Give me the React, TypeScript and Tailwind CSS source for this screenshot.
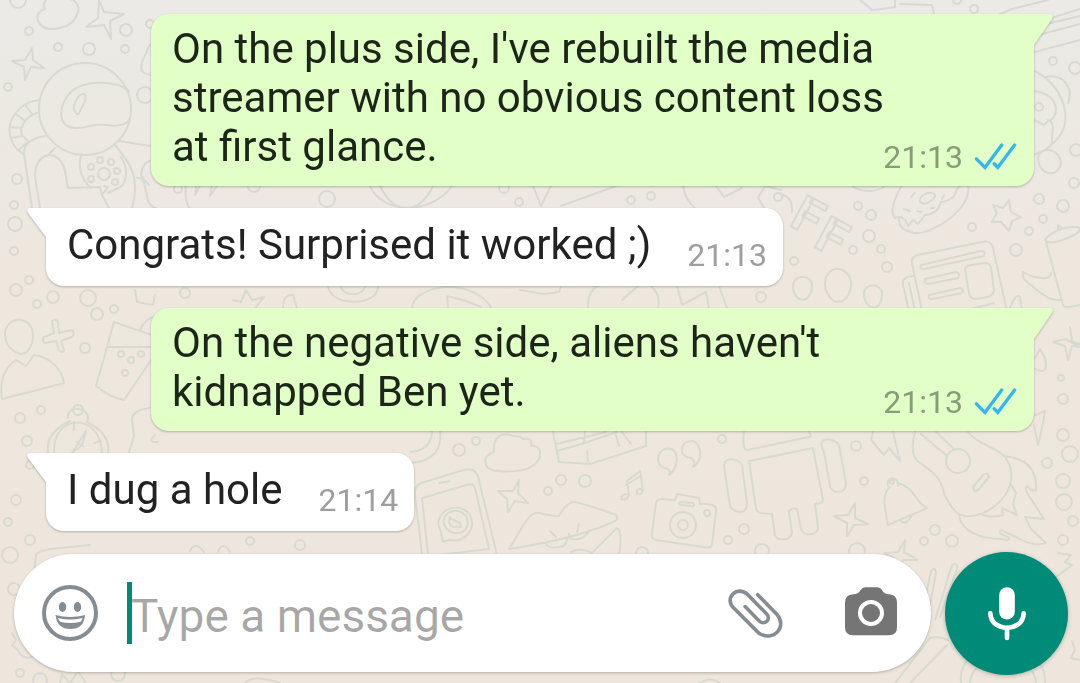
import type { ReactNode } from "react";

type Message = {
  text: string;
  time: string;
  sent?: boolean;
};

const messages: Message[] = [
  {
    text: "On the plus side, I've rebuilt the media streamer with no obvious content loss at first glance.",
    time: "21:13",
    sent: true,
  },
  { text: "Congrats! Surprised it worked ;)", time: "21:13" },
  {
    text: "On the negative side, aliens haven't kidnapped Ben yet.",
    time: "21:13",
    sent: true,
  },
  { text: "I dug a hole", time: "21:14" },
];

// x, y, radius
const bubbles = [
  [18, 0, 8], [29, 31, 4], [126, 30, 6], [58, 47, 4], [89, 49, 6], [125, 49, 4],
  [8, 87, 4], [145, 95, 8], [17, 179, 5], [14, 205, 4], [150, 24, 4], [858, 206, 4],
  [871, 215, 5], [869, 236, 6], [853, 250, 4], [881, 249, 4], [887, 267, 5], [794, 261, 4],
  [972, 227, 4], [1039, 199, 5], [1063, 206, 6], [1043, 219, 4], [1029, 231, 4], [1016, 250, 6],
  [1074, 183, 5], [16, 290, 6], [37, 304, 4], [53, 297, 6], [88, 298, 8], [97, 314, 6],
  [114, 309, 4], [85, 348, 5], [20, 418, 5], [41, 410, 4], [27, 441, 5], [30, 465, 4],
  [459, 450, 6], [476, 441, 4], [561, 480, 5], [585, 481, 6], [548, 491, 4], [722, 439, 4],
  [728, 540, 4], [744, 529, 5], [642, 553, 6], [856, 446, 5], [864, 481, 4], [762, 551, 7],
  [857, 551, 8], [924, 541, 4], [935, 530, 5], [952, 541, 6], [1063, 435, 6], [1070, 454, 8],
  [1047, 463, 5], [1063, 481, 7], [1064, 502, 8], [1073, 521, 5], [1063, 540, 5], [10, 555, 8],
  [14, 589, 6], [20, 673, 4], [40, 680, 7], [118, 674, 7], [974, 9, 4], [1053, 61, 4],
  [1075, 68, 6], [1076, 150, 6], [957, 0, 4], [1061, 378, 3], [1063, 399, 5], [15, 224, 7],
  [14, 251, 4], [29, 280, 4], [178, 189, 4], [254, 186, 6], [327, 199, 8], [504, 188, 5],
  [519, 202, 4], [631, 200, 4], [651, 196, 4], [778, 197, 4], [185, 293, 5], [761, 297, 5],
  [121, 354, 3], [131, 360, 3], [141, 354, 3], [125, 373, 3], [100, 160, 3], [111, 162, 3],
  [91, 167, 3], [117, 171, 3], [91, 179, 3], [115, 182, 3], [104, 174, 6], [16, 500, 5],
  [8, 522, 4], [30, 540, 5], [300, 545, 5], [250, 541, 4],
];

const doodles = [
  // cloud, sparkles
  "M46 0Q42 6 45 9Q35 12 38 21Q42 30 54 29Q74 27 78 12Q80 3 72 0",
  "M99 0L104 12L124 14L110 21L111 39L104 25L86 27L98 18Z",
  "M32 48L33 60L44 68L31 67L25 80L24 67L12 61L25 60Z",
  "M519 480L518 493L528 503L515 501L508 512L507 499L498 491L513 491Z",
  "M855 503L855 518L868 524L854 525L847 536L847 523L834 516L848 515Z",
  "M1070 327L1072 341L1080 344M1080 347L1072 346L1068 360L1065 346L1053 342L1065 339Z",
  "M905 540L904 552L918 560L903 560L898 570L894 558L884 553L898 552Z",
  // astronaut
  "M129 91C118 81 87 79 72 91C58 103 56 127 75 128C89 129 91 122 106 125C119 127 128 124 129 119",
  "M75 111C71 108 78 94 83 94C91 94 79 112 79 113Q77 116 75 111Z",
  "M39 100C18 102 7 122 10 134C12 145 16 149 23 154M37 113C25 117 19 127 22 135L28 141M26 106L32 114M16 114L25 121M10 127L21 128M11 138L22 136M19 150L26 143",
  "M45 136Q23 140 24 154L32 208M40 208L35 177C34 151 60 147 65 171L68 188L100 187L102 195L108 187L104 186M102 195L109 208M55 148L48 155M115 145C130 163 141 177 132 208M119 141L151 146",
  "M121 157C127 166 128 178 122 186L108 193M82 154C77 164 81 180 91 188",
  "M155 160Q142 160 141 176L149 185M155 40Q146 48 147 52Q139 64 142 71Q145 75 155 75M137 178C150 177 142 206 156 208",
  // bear and lines on the right
  "M1000 14L1012 9L1048 0M1030 28L1080 16M1035 36L1080 24M1035 52L1080 40M1042 21L1080 9",
  "M860 0L872 10M874 10L895 7L895 0M900 4L932 5L934 14",
  "M1030 69C1064 82 1078 125 1052 144C1047 150 1038 154 1030 155M1046 77C1063 73 1074 88 1068 103M1030 91C1060 91 1061 118 1048 121L1044 125L1030 118M1048 120C1056 121 1051 136 1052 144",
  "M1038 157C1042 145 1060 149 1061 163C1058 179 1038 176 1038 157Z",
  // donut
  "M901 187Q888 210 895 218Q904 214 908 226L913 220L918 224L925 215Q938 214 941 202Q955 200 956 191L960 186M901 187L904 181M967 181C977 207 932 235 915 233Q898 230 899 219M911 197L915 193M904 209L910 211M917 211L921 212M942 199L944 195M931 208L934 208",
  "M920 201C919 194 933 190 935 195C936 199 924 208 920 201Z",
  "M853 187Q870 195 884 187M780 194Q793 196 792 212",
  // star, newspaper, balloons
  "M1009 200L1011 212L1021 217L1012 221L1009 231L1001 222L992 222L997 213L993 205L1003 208Z",
  "M922 311L912 263Q911 257 918 255L982 242Q991 240 993 248L1007 311M913 276Q901 277 903 285L909 311M909 283L915 311M1010 307Q1017 292 1020 297L1022 311",
  "M921 265L981 251Q986 251 984 256L924 269Q919 269 921 265ZM925 279L956 272Q961 273 958 278L929 284Q924 284 925 279ZM929 295L960 288Q965 289 962 293L933 299Q928 300 929 295ZM971 265L985 263Q990 263 991 268L994 290Q993 296 987 297L976 299Q970 299 969 293L965 270Q965 266 971 265ZM971 309L994 303",
  "M825 286C824 261 853 266 851 286C848 307 829 307 825 286ZM793 287C793 273 813 274 812 287C811 304 794 304 793 287ZM864 296C862 282 883 282 882 295C882 311 867 312 864 296Z",
  // mug
  "M1045 240C1050 231 1068 226 1077 227Q1083 229 1076 234C1062 241 1049 246 1045 240ZM1046 242L1063 305Q1064 309 1080 305M1058 230L1058 225L1062 228M1023 272C1029 276 1051 283 1051 273M1023 272Q1022 277 1025 280C1041 294 1050 301 1060 300",
  // raindrop and carrot
  "M1030 366C1048 378 1047 366 1045 358L1040 349L1035 358M1030 417L1045 411Q1043 425 1038 445L1034 425",
  // person, plus, cup
  "M5 335C5 315 33 314 33 336C32 349 26 354 21 354C13 352 6 347 5 335ZM2 399Q-2 372 16 360L26 366L34 355C51 357 62 370 64 383L2 399",
  "M52 321Q56 318 58 322L59 333L71 330Q76 332 72 337L61 341L64 350Q62 354 59 350L56 341L45 343Q41 340 44 337L54 333Z",
  "M114 322L96 386Q109 397 124 400L155 354M114 322L155 336M108 347L155 347M140 330Q143 321 155 316M135 290L137 302L153 305L155 295",
  "M155 407Q131 410 132 420L134 436L129 452M155 435Q146 443 158 442",
  // compass
  "M68 418C66 406 86 406 88 417L87 422Q111 434 108 453M70 421Q45 433 48 453M54 453C52 413 101 412 102 453M74 422L74 430M94 443L101 441M72 453L86 431L82 445L72 453M77 442L83 446",
  // strip between the rows
  "M186 180Q184 207 192 210M197 180L195 195L203 180M213 180L210 196L218 184M370 186C382 214 430 216 452 186M380 186Q389 204 400 207M433 186Q425 204 410 208M533 186L541 206L551 186M561 206L616 186M683 186Q685 200 695 208M716 186L724 197L742 188M764 208L758 198L765 186L781 190",
  "M233 300L241 302L246 290L252 300L264 297L256 307M283 308Q283 294 293 295L297 308M328 286C330 307 379 307 378 286M340 286C344 297 363 297 365 286M412 307C415 285 470 276 491 307M448 307L447 296L463 300L481 307M520 290L544 294L559 292L562 284M588 308Q588 290 598 286M622 300L638 286M651 286Q661 295 658 308M677 286L682 305L706 292L709 308M719 286L727 308",
  // phone
  "M422 555L415 495Q414 486 421 483L464 470Q474 467 478 476L497 555M428 555L422 498L470 484Q474 484 475 488L489 549L438 555M439 483L450 481",
  "M443 542L441 532C430 513 457 498 470 515C477 530 464 543 449 540ZM446 528C437 515 456 504 466 516C473 530 457 540 446 528ZM450 517Q446 529 461 527L460 523L451 519Z",
  // cloud, box, quotes, notes
  "M487 467C482 459 488 454 494 452C492 438 502 431 513 436Q521 436 523 439C532 438 532 441 531 446C542 444 543 458 534 465C522 474 493 473 487 467Z",
  "M411 463Q444 460 440 430M411 452Q432 450 432 430",
  "M553 432L559 462L590 464L646 446L646 432M556 444L606 432M557 451L585 443L617 432M585 432L584 443M587 451L588 461M615 432L619 446M622 432L631 444",
  "M669 475Q672 469 665 468C653 466 657 445 672 449C680 454 677 470 669 475ZM693 467Q696 461 691 458C678 458 679 440 693 441C703 445 702 462 693 467Z",
  "M629 495L627 481L640 471L643 490M626 485L641 476M629 495Q622 492 621 499Q627 501 629 495M643 490Q636 487 637 494Q642 495 643 490",
  // lips
  "M509 549C522 529 528 511 539 513Q551 516 559 516Q567 501 575 502Q598 508 616 515Q621 520 608 524Q570 540 509 549ZM550 531L556 537M579 524L577 532M546 544Q550 550 564 546L568 538M569 534Q569 542 582 538L590 531M590 555Q612 533 617 528Q623 531 619 555M571 552Q581 547 592 553",
  // camera
  "M660 499L675 500L677 494L699 498L700 504Q718 503 716 511L712 544Q711 549 703 547L656 540Q650 538 652 533L656 503Q657 499 660 499ZM681 502L693 503Q696 507 691 506L681 505Q677 503 681 502Z",
  // robot
  "M744 432Q742 450 747 450L809 437Q812 437 809 432M749 461L813 448L823 500Q823 503 815 504L818 528Q817 535 807 534Q802 533 801 529L797 509Q793 507 789 511L792 533Q790 541 779 539Q776 538 775 535L772 514L760 513Q757 512 756 508ZM824 452C814 435 835 438 839 445L846 483C846 496 831 493 830 486ZM724 466C724 456 739 458 742 466L747 503C747 516 734 513 730 506Z",
  // bell, bolt
  "M890 487C881 495 885 508 888 525L927 508C916 503 914 487 898 483M888 486C885 476 900 476 898 486M901 521Q906 526 912 515M873 432L871 440L884 455L889 448L900 461L893 432",
  // guitar
  "M915 432Q908 458 922 464C938 476 941 480 945 496C955 514 959 517 972 516C1003 511 1023 478 1004 456C993 445 978 445 968 432M921 434L947 456M936 432L955 450M973 487L983 475Q988 472 989 477L979 489Q974 494 973 487ZM1005 456Q1038 460 1036 490Q1032 492 1027 486Q1024 488 1029 496L1044 519Q1034 518 1025 517L1031 529L1046 543Q1034 547 1020 539L1001 530Q996 533 1008 537Q1012 541 1002 539C979 539 962 531 959 516M983 515Q992 518 1003 515L1002 508L1017 515L1013 504L1016 493L1010 483",
  // bottom corners
  "M34 573L36 555Q36 552 50 549L90 545M12 633L16 640L12 645L18 650Q22 660 32 657M60 683L62 674L70 683L78 671L86 683M245 683Q253 674 280 683M190 551Q195 540 204 552M218 552Q222 540 230 552",
  "M925 600L931 571Q935 566 936 573L930 605M935 620L952 565Q958 562 957 569L940 617M1058 553L1071 555L1065 562L1072 565L1055 578M1072 641L1075 650L1071 658L1080 660M895 683L930 638Q940 636 948 640M910 683L947 645M961 683C955 635 1048 635 1045 683M970 683C972 650 1034 650 1036 683M700 683Q710 676 720 683",
];

const Wallpaper = () => (
  <svg
    className="absolute inset-0 -z-10 h-full w-full"
    viewBox="0 0 1080 683"
    preserveAspectRatio="xMidYMid slice"
    fill="none"
    stroke="#d8dad2"
    strokeWidth="2"
    strokeLinejoin="round"
    strokeLinecap="round"
    aria-hidden="true"
  >
    {bubbles.map(([x, y, r], i) => (
      <circle key={i} cx={x} cy={y} r={r} />
    ))}
    {doodles.map((d, i) => (
      <path key={i} d={d} />
    ))}
    <circle cx="85" cy="109" r="46" />
    <circle cx="78" cy="410" r="5" />
    <circle cx="1039" cy="107" r="4" />
    <circle cx="683" cy="525" r="13" />
    <circle cx="683" cy="525" r="5" />
    <circle cx="707" cy="513" r="3" />
    <circle cx="958" cy="461" r="12" />
    <circle cx="892" cy="482" r="2" />
    <g className="font-['Roboto',sans-serif] text-[50px] font-bold">
      <text transform="translate(788 225) rotate(28)">F</text>
      <text transform="translate(812 246) rotate(28)">F</text>
    </g>
  </svg>
);

const Ticks = () => (
  <svg className="h-7 w-[43px]" viewBox="340 428 130 85" fill="none" stroke="#34b7f1" strokeWidth="10" strokeLinecap="round" role="img" aria-label="Read">
    <path d="M347 476L373 502L424 434M401 491L412 502L463 434" />
  </svg>
);

const Bubble = ({ text, time, sent }: Message) => (
  <li
    className={
      sent
        ? "relative ml-[105px] flex items-end rounded-[18px] rounded-tr-none bg-[#e1ffc7] pt-[10px] pr-[17px] pb-[15px] pl-[21px] drop-shadow-[0_1px_1px_rgba(0,0,0,0.25)]"
        : "relative mr-[105px] flex items-end gap-9 self-start rounded-[18px] rounded-tl-none bg-white pt-3 pr-4 pb-[17px] pl-[21px] drop-shadow-[0_1px_1px_rgba(0,0,0,0.25)]"
    }
  >
    {sent ? (
      <svg className="absolute top-0 -right-[19px] h-8 w-5" viewBox="0 0 20 32" fill="#e1ffc7" aria-hidden="true">
        <path d="M0 0H18Q21 1 19 5L1 31H0Z" />
      </svg>
    ) : (
      <svg className="absolute top-0 -left-[19px] h-8 w-5" viewBox="0 0 20 32" fill="#fff" aria-hidden="true">
        <path d="M20 0H2Q-1 1 1 5L19 29V32H20Z" />
      </svg>
    )}
    <p className={sent ? "-mr-3 flex-1 text-[42px] leading-[49px] text-[#1c2618]" : "text-[42px] leading-[49px] text-[#222]"}>{text}</p>
    <div className="flex h-7 shrink-0 items-center gap-[11px]">
      <time className={sent ? "text-[32px] leading-7 text-[#879c77]" : "text-[32px] leading-7 text-[#9e9e9e]"}>{time}</time>
      {sent && <Ticks />}
    </div>
  </li>
);

const IconButton = ({ label, children }: { label: string; children: ReactNode }) => (
  <button type="button" aria-label={label} className="flex shrink-0 items-center justify-center">
    {children}
  </button>
);

const Composer = () => (
  <form className="flex items-start gap-[14px] pr-3 pl-[14px]" onSubmit={(e) => e.preventDefault()}>
    <div className="mt-[2px] flex h-[118px] min-w-0 flex-1 items-center rounded-full bg-white pr-[34px] pl-7 shadow-[0_1px_3px_rgba(0,0,0,0.25)]">
      <IconButton label="Emoji">
        <svg className="h-14 w-14" viewBox="0 0 56 56" fill="#858d92">
          <circle cx="28" cy="28" r="26" fill="none" stroke="#858d92" strokeWidth="4" />
          <ellipse cx="20.5" cy="22" rx="3.7" ry="5" />
          <ellipse cx="35.5" cy="22" rx="3.7" ry="5" />
          <path d="M13.500 30Q28 34 43 30Q42 44 28.500 44Q15 44 13.500 30Z" />
          <path d="M16 33Q28 36 40.500 33Q40 36 38 37Q28 39 19 37Q17 36 16 33Z" fill="#fff" />
        </svg>
      </IconButton>
      <div className="relative ml-[29px] min-w-0 flex-1">
        <span className="absolute top-0 left-0 h-full w-[5px] bg-[#008a78]" aria-hidden="true" />
        <input
          type="text"
          aria-label="Message"
          placeholder="Type a message"
          className="relative block h-[62px] w-full bg-transparent pt-[6px] pl-1 text-[46px] text-[#222] caret-[#008a78] outline-none placeholder:text-black/35"
        />
      </div>
      <IconButton label="Attach">
        <svg className="h-[52px] w-14" viewBox="82 125 170 155" fill="none" stroke="#858d92" strokeWidth="11" strokeLinecap="round">
          <path d="M172 147L230 206C264 244 220 292 176 264L98 186C70 156 110 118 141 146L200 206C214 222 192 242 176 226L134 183" />
        </svg>
      </IconButton>
      <div className="ml-[61px] flex">
        <IconButton label="Camera">
          <svg className="h-[52px] w-[52px]" viewBox="435 125 156 156" fill="#757575">
            <path d="M460 147Q474 147 482 134Q487 126 496 126H532Q541 126 546 134Q553 147 567 147Q591 148 591 172V246Q591 270 567 270H459Q435 270 435 246V172Q435 148 460 147Z" />
            <circle cx="513" cy="203" r="33" fill="none" stroke="#fff" strokeWidth="12" />
          </svg>
        </IconButton>
      </div>
    </div>
    <button
      type="button"
      aria-label="Record voice message"
      className="flex h-[123px] w-[123px] shrink-0 items-center justify-center rounded-full bg-[#008a78] shadow-[0_1px_4px_rgba(0,0,0,0.25)]"
    >
      <svg className="h-14 w-10" viewBox="860 122 120 168" fill="none" stroke="#fff" strokeLinecap="round">
        <path d="M920 149V199" strokeWidth="47" />
        <path d="M870 204C872 262 968 262 970 204M920 250V278" strokeWidth="14" />
      </svg>
    </button>
  </form>
);

export default function App() {
  return (
    <main className="relative isolate flex min-h-screen flex-col overflow-hidden bg-linear-to-b from-[#ebeae6] via-[#eee7de] via-40% to-[#eee6dd] pt-[14px] pb-2 font-['Roboto',sans-serif]">
      <Wallpaper />
      <ul className="flex flex-1 flex-col gap-[22px] px-[46px]">
        {messages.map((m) => (
          <Bubble key={m.text} {...m} />
        ))}
      </ul>
      <div className="mt-[21px]">
        <Composer />
      </div>
    </main>
  );
}
